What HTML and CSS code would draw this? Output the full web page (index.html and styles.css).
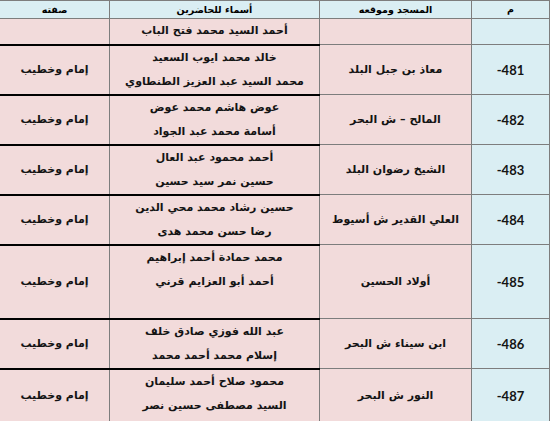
FILE: index.html
```html
<!DOCTYPE html>
<html lang="ar" dir="rtl">
<head>
<meta charset="utf-8">
<title>جدول الأئمة</title>
<link rel="stylesheet" href="styles.css">
</head>
<body>
<table class="grid">
  <colgroup>
    <col class="c-num">
    <col class="c-mosque">
    <col class="c-names">
    <col class="c-role">
  </colgroup>
  <thead>
    <tr class="head">
      <th>م</th>
      <th>المسجد وموقعه</th>
      <th>أسماء للحاضرين</th>
      <th>صفته</th>
    </tr>
  </thead>
  <tbody>
    <tr class="r-single">
      <td class="num"></td>
      <td class="mosque"></td>
      <td class="names"><div>أحمد السيد محمد فتح الباب</div></td>
      <td class="role"></td>
    </tr>
    <tr class="r-double">
      <td class="num">-481</td>
      <td class="mosque">معاذ بن جبل البلد</td>
      <td class="names"><div>خالد محمد ايوب السعيد</div><div>محمد السيد عبد العزيز الطنطاوي</div></td>
      <td class="role">إمام وخطيب</td>
    </tr>
    <tr class="r-double">
      <td class="num">-482</td>
      <td class="mosque">المالح – ش البحر</td>
      <td class="names"><div>عوض هاشم محمد عوض</div><div>أسامة محمد عبد الجواد</div></td>
      <td class="role">إمام وخطيب</td>
    </tr>
    <tr class="r-double">
      <td class="num">-483</td>
      <td class="mosque">الشيخ رضوان البلد</td>
      <td class="names"><div>أحمد محمود عبد العال</div><div>حسين نمر سيد حسين</div></td>
      <td class="role">إمام وخطيب</td>
    </tr>
    <tr class="r-double">
      <td class="num">-484</td>
      <td class="mosque">العلي القدير ش أسيوط</td>
      <td class="names"><div>حسين رشاد محمد محي الدين</div><div>رضا حسن محمد هدى</div></td>
      <td class="role">إمام وخطيب</td>
    </tr>
    <tr class="r-triple">
      <td class="num">-485</td>
      <td class="mosque">أولاد الحسين</td>
      <td class="names"><div>محمد حمادة أحمد إبراهيم</div><div>أحمد أبو العزايم قرني</div><div>&nbsp;</div></td>
      <td class="role">إمام وخطيب</td>
    </tr>
    <tr class="r-double">
      <td class="num">-486</td>
      <td class="mosque">ابن سيناء ش البحر</td>
      <td class="names"><div>عبد الله فوزي صادق خلف</div><div>إسلام محمد أحمد محمد</div></td>
      <td class="role">إمام وخطيب</td>
    </tr>
    <tr class="r-last">
      <td class="num">-487</td>
      <td class="mosque">النور ش البحر</td>
      <td class="names"><div>محمود صلاح أحمد سليمان</div><div>السيد مصطفى حسين نصر</div></td>
      <td class="role">إمام وخطيب</td>
    </tr>
  </tbody>
</table>
</body>
</html>
```

FILE: styles.css
```css
html, body {
  margin: 0;
  padding: 0;
  background: #ffffff;
}

body {
  font-family: "DejaVu Sans", sans-serif;
  color: #141414;
}

.grid {
  width: 550px;
  border-collapse: collapse;
  table-layout: fixed;
}

.c-num { width: 78px; }
.c-mosque { width: 152px; }
.c-names { width: 210px; }
.c-role { width: 110px; }

.grid th,
.grid td {
  border: 1px solid #7d7d7d;
  padding: 0;
  text-align: center;
  vertical-align: middle;
}

.head th {
  height: 17px;
  background: #daeef3;
  font-size: 9.5px;
  font-weight: 700;
  color: #000;
}

.r-single { height: 26px; }
.r-double { height: 49px; }
.r-triple { height: 73px; }
.r-last { height: 54px; }

.grid td.num {
  background: #daeef3;
  font-family: "Lato", "Open Sans", sans-serif;
  font-weight: 700;
  font-size: 13px;
  direction: ltr;
  unicode-bidi: bidi-override;
}

.grid td.mosque {
  background: #f2dbdb;
  font-size: 11px;
  font-weight: 700;
}

.grid td.names {
  background: #f2dbdb;
  font-size: 11px;
  font-weight: 700;
  line-height: 24px;
  vertical-align: top;
  border-bottom: 2px solid #000;
}

.grid td.role {
  background: #f2dbdb;
  font-size: 11px;
  font-weight: 700;
  border-bottom: 2px solid #000;
}
```
